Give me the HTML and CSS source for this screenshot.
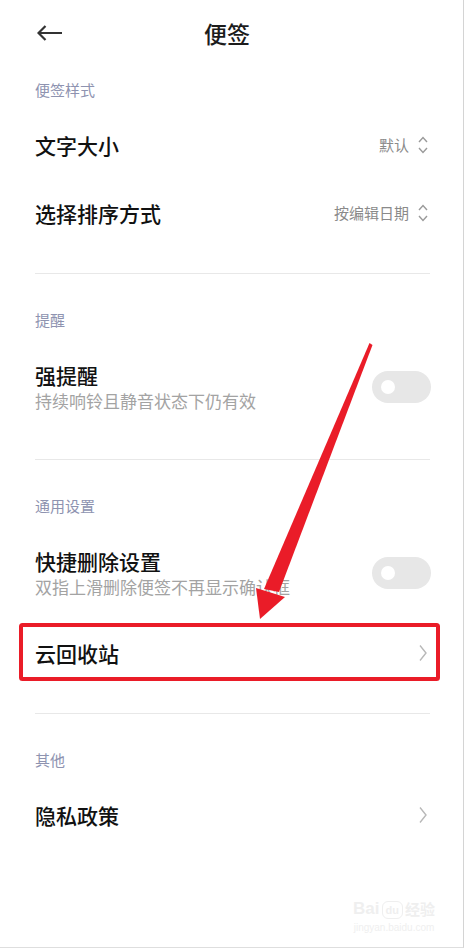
FILE: index.html
```html
<!DOCTYPE html>
<html lang="zh-CN">
<head>
<meta charset="utf-8">
<title>便签</title>
<link rel="stylesheet" href="styles.css">
</head>
<body>
<div class="screen">
  <header class="topbar">
    <svg class="back" viewBox="0 0 25 16" width="25" height="16"><path d="M25 8 H1.5 M8.5 1 L1.5 8 L8.5 15" fill="none" stroke="#333" stroke-width="2.2" stroke-linejoin="miter"/></svg>
    <h1 class="title">便签</h1>
    <span></span>
  </header>

  <section class="group">
    <div class="group-label first">便签样式</div>
    <div class="row">
      <span class="row-title">文字大小</span>
      <span class="row-value">默认<svg class="updown" viewBox="0 0 10 18" width="10" height="18"><path d="M1 6 L5 1.5 L9 6 M1 12 L5 16.5 L9 12" fill="none" stroke="#9a9a9a" stroke-width="1.4"/></svg></span>
    </div>
    <div class="row">
      <span class="row-title">选择排序方式</span>
      <span class="row-value">按编辑日期<svg class="updown" viewBox="0 0 10 18" width="10" height="18"><path d="M1 6 L5 1.5 L9 6 M1 12 L5 16.5 L9 12" fill="none" stroke="#9a9a9a" stroke-width="1.4"/></svg></span>
    </div>
  </section>
  <div class="divider"></div>

  <section class="group">
    <div class="group-label">提醒</div>
    <div class="row two">
      <div class="row-text">
        <div class="row-title">强提醒</div>
        <div class="row-sub">持续响铃且静音状态下仍有效</div>
      </div>
      <span class="toggle"><span class="knob"></span></span>
    </div>
  </section>
  <div class="divider"></div>

  <section class="group">
    <div class="group-label">通用设置</div>
    <div class="row two">
      <div class="row-text">
        <div class="row-title">快捷删除设置</div>
        <div class="row-sub">双指上滑删除便签不再显示确认框</div>
      </div>
      <span class="toggle"><span class="knob"></span></span>
    </div>
    <div class="row">
      <span class="row-title">云回收站</span>
      <svg class="chev" viewBox="0 0 8 18" width="8" height="18"><path d="M1 1.5 L7 9 L1 16.5" fill="none" stroke="#b8b8b8" stroke-width="1.4"/></svg>
    </div>
  </section>
  <div class="divider"></div>

  <section class="group">
    <div class="group-label">其他</div>
    <div class="row">
      <span class="row-title">隐私政策</span>
      <svg class="chev" viewBox="0 0 8 18" width="8" height="18"><path d="M1 1.5 L7 9 L1 16.5" fill="none" stroke="#b8b8b8" stroke-width="1.4"/></svg>
    </div>
  </section>

  <svg class="annotation" viewBox="0 0 464 948" width="464" height="948">
    <rect x="21" y="625" width="417" height="54" rx="1.5" fill="none" stroke="#ea1c28" stroke-width="4"/>
    <polygon points="369.5,343 372.5,345 279,592 264,589" fill="#ea1c28"/>
    <polygon points="256,588 285,597 260,619" fill="#ea1c28"/>
  </svg>

  <div class="watermark">
    <div class="wm-top"><span class="wm-bai">Bai</span><span class="wm-paw">du</span><span class="wm-jy">经验</span></div>
    <div class="wm-url">jingyan.baidu.com</div>
  </div>
</div>
</body>
</html>
```

FILE: styles.css
```css
* { box-sizing: border-box; margin: 0; padding: 0; }

body {
  margin: 0;
  background: #fff;
  font-family: "Noto Sans CJK SC", "Noto Sans", sans-serif;
}

.screen {
  position: relative;
  width: 464px;
  height: 948px;
  border-right: 1px solid #d4d4d4;
  border-bottom: 1px solid #dedede;
  overflow: hidden;
  background: #fff;
}

.topbar {
  display: grid;
  grid-template-columns: 1fr auto 1fr;
  align-items: center;
  height: 66px;
  padding: 0 46px 0 37px;
}

.back { display: block; }

.title {
  font-size: 23px;
  font-weight: 500;
  line-height: 30px;
  color: #1c1c1c;
}

.group { padding-bottom: 26px; }

.group-label {
  padding: 36px 35px 11px;
  font-size: 15px;
  line-height: 20px;
  color: #8e93b0;
}

.group-label.first { padding-top: 14px; }

.row {
  display: flex;
  align-items: center;
  justify-content: space-between;
  height: 68px;
  padding: 0 35px 0 35px;
}

.row.two {
  height: auto;
  padding: 21px 32px 21px 35px;
}

.row-title {
  font-size: 21px;
  line-height: 26px;
  font-weight: 500;
  color: #111;
}

.row-sub {
  margin-top: 2px;
  font-size: 17px;
  line-height: 22px;
  color: #a3a3a3;
}

.row-value {
  display: flex;
  align-items: center;
  gap: 9px;
  font-size: 15px;
  line-height: 20px;
  color: #8a8a8a;
  margin-right: 0;
}

.updown { display: block; }

.chev { display: block; margin-right: 1px; }

.toggle {
  display: flex;
  align-items: center;
  width: 59px;
  height: 32px;
  padding-left: 9px;
  border-radius: 16px;
  background: #e7e7e7;
}

.knob {
  width: 14px;
  height: 14px;
  border-radius: 50%;
  background: #fff;
}

.divider {
  height: 1px;
  margin: 0 33px 0 35px;
  background: #e8e8e8;
}

.annotation {
  position: absolute;
  left: 0;
  top: 0;
  pointer-events: none;
}

.watermark {
  position: absolute;
  right: 28px;
  bottom: 12px;
  color: #efefef;
  font-family: "Liberation Sans", sans-serif;
  text-align: center;
}

.wm-top {
  display: flex;
  align-items: flex-end;
  gap: 2px;
  font-size: 17px;
  line-height: 20px;
  font-weight: 700;
}

.wm-paw {
  font-size: 11px;
  line-height: 14px;
  padding: 1px 3px;
  border: 1px solid #efefef;
  border-radius: 6px;
}

.wm-jy {
  font-family: "Noto Sans CJK SC", sans-serif;
  font-size: 15px;
}

.wm-url {
  font-size: 10px;
  line-height: 14px;
  margin-top: 2px;
}
```
